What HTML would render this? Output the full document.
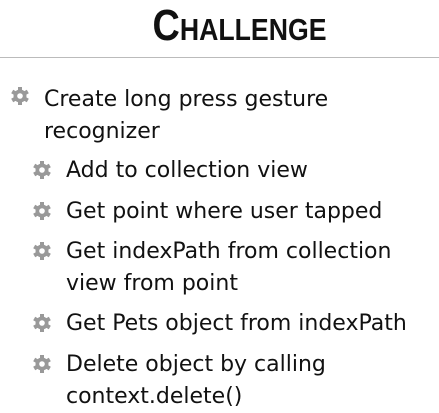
<!DOCTYPE html>
<html><head><style>
body{margin:0;width:439px;height:410px;background:#fff;position:relative;overflow:hidden;font-family:"DejaVu Sans","Liberation Sans",sans-serif;color:#111}
.t{position:absolute;left:20px;width:439px;top:1px;text-align:center;font-family:"Liberation Sans",sans-serif;font-size:44px;font-weight:bold;font-variant:small-caps;transform:scaleX(0.86);transform-origin:center}
.hr{position:absolute;left:0;width:439px;top:57px;height:1px;background:#bbb}
.i{position:absolute;font-size:22px;line-height:32px;white-space:nowrap;letter-spacing:0px}
.g{position:absolute;width:20px;height:20px}
</style></head><body>
<div class="t">Challenge</div>
<div class="hr"></div>
<svg width="0" height="0" style="position:absolute"><defs><g id="gear"><g fill="#999"><circle cx="10" cy="10" r="6.5"/><rect x="8" y="1" width="4" height="18"/><rect x="8" y="1" width="4" height="18" transform="rotate(60 10 10)"/><rect x="8" y="1" width="4" height="18" transform="rotate(120 10 10)"/></g><circle cx="10" cy="10" r="2.8" fill="#fff"/></g></defs></svg>
<svg class="g" style="left:10px;top:86px" viewBox="0 0 20 20"><use href="#gear"/></svg>
<div class="i" style="left:44px;top:84px">Create long press gesture<br>recognizer</div>
<svg class="g" style="left:32px;top:160px" viewBox="0 0 20 20"><use href="#gear"/></svg>
<div class="i" style="left:66px;top:155px">Add to collection view</div>
<svg class="g" style="left:32px;top:201px" viewBox="0 0 20 20"><use href="#gear"/></svg>
<div class="i" style="left:66px;top:196px">Get point where user tapped</div>
<svg class="g" style="left:32px;top:241px" viewBox="0 0 20 20"><use href="#gear"/></svg>
<div class="i" style="left:66px;top:236px">Get indexPath from collection<br>view from point</div>
<svg class="g" style="left:32px;top:313px" viewBox="0 0 20 20"><use href="#gear"/></svg>
<div class="i" style="left:66px;top:308px">Get Pets object from indexPath</div>
<svg class="g" style="left:32px;top:354px" viewBox="0 0 20 20"><use href="#gear"/></svg>
<div class="i" style="left:66px;top:349px">Delete object by calling<br>context.delete()</div>
</body></html>
